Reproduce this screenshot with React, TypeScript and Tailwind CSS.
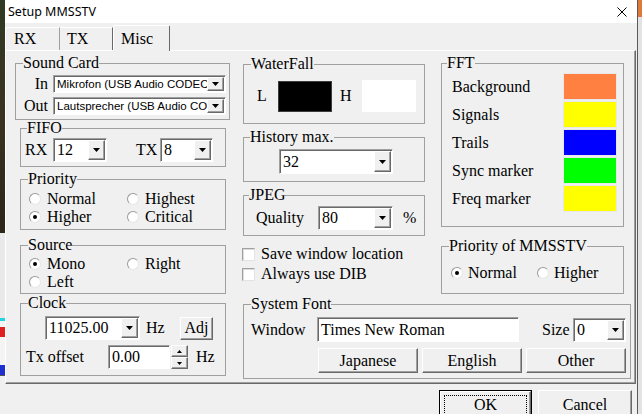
import React from "react";

// Setup MMSSTV dialog, Misc tab

const raised =
  "border border-t-white border-l-white border-r-[#696969] border-b-[#696969] bg-[#f0f0f0] shadow-[inset_-1px_-1px_0_#a0a0a0]";
const sunken =
  "border border-t-[#a0a0a0] border-l-[#a0a0a0] border-r-white border-b-white bg-white shadow-[inset_1px_1px_0_#696969]";

function DownArrow() {
  return (
    <svg width="7" height="4" viewBox="0 0 7 4" className="block">
      <path d="M0 0H7L3.5 4Z" fill="#000" />
    </svg>
  );
}

function UpArrow() {
  return (
    <svg width="5" height="3" viewBox="0 0 5 3" className="block">
      <path d="M0 3H5L2.5 0Z" fill="#000" />
    </svg>
  );
}

const Combo: React.FC<{ value: string; className?: string; small?: boolean }> = ({
  value,
  className = "",
  small = false,
}) => (
  <div className={`flex shrink-0 p-[1px] ${sunken} ${className}`}>
    <span
      className={`flex min-w-0 flex-1 items-center overflow-hidden whitespace-nowrap pl-[2px] ${
        small ? "font-['Liberation_Sans',Arial,sans-serif] text-[11.5px]" : ""
      }`}
    >
      {value}
    </span>
    <span className={`flex w-[17px] shrink-0 items-center justify-center ${raised}`}>
      <DownArrow />
    </span>
  </div>
);

const Edit: React.FC<{ value: string; className?: string }> = ({ value, className = "" }) => (
  <div className={`flex shrink-0 items-center overflow-hidden whitespace-nowrap pl-[3px] ${sunken} ${className}`}>
    {value}
  </div>
);

const Btn: React.FC<{ children: React.ReactNode; className?: string }> = ({ children, className = "" }) => (
  <div className={`flex shrink-0 items-center justify-center ${raised} ${className}`}>{children}</div>
);

const Group: React.FC<{ title: string; className?: string; legendClass?: string; children: React.ReactNode }> = ({
  title,
  className = "",
  legendClass = "ml-[7px]",
  children,
}) => (
  <fieldset className={`min-w-0 shrink-0 border border-[#a0a0a0] ${className}`}>
    <legend className={`leading-[16px] ${legendClass}`}>{title}</legend>
    {children}
  </fieldset>
);

const Radio: React.FC<{ label: string; checked?: boolean; gap?: string }> = ({ label, checked, gap = "gap-[6px]" }) => (
  <div className={`flex h-[18px] items-center ${gap}`}>
    <span className="flex h-[12px] w-[12px] shrink-0 items-center justify-center rounded-full border border-t-[#9a9a9a] border-l-[#9a9a9a] border-r-[#e6e6e6] border-b-[#e6e6e6] bg-white">
      {checked && <span className="h-[4px] w-[4px] rounded-full bg-black" />}
    </span>
    <span>{label}</span>
  </div>
);

const Check: React.FC<{ label: string }> = ({ label }) => (
  <div className="flex h-[20px] items-center gap-[6px]">
    <span className="h-[13px] w-[13px] shrink-0 border border-t-[#a0a0a0] border-l-[#a0a0a0] border-r-[#e3e3e3] border-b-[#e3e3e3] bg-white shadow-[inset_1px_1px_0_#dcdcdc]" />
    <span>{label}</span>
  </div>
);

const fftColors = [
  { label: "Background", color: "bg-[#ff8040]" },
  { label: "Signals", color: "bg-[#ffff00]" },
  { label: "Trails", color: "bg-[#0000ff]" },
  { label: "Sync marker", color: "bg-[#00ff00]" },
  { label: "Freq marker", color: "bg-[#ffff00]" },
];

function LeftColumn() {
  return (
    <div className="ml-[9px] flex w-[216px] shrink-0 flex-col">
      <Group title="Sound Card" className="mt-[4px] h-[65px] w-[215px]">
        <div className="mt-[4px] flex items-center">
          <span className="w-[32px] text-right">In</span>
          <Combo small value="Mikrofon (USB Audio CODEC" className="ml-[5px] h-[18px] w-[173px]" />
        </div>
        <div className="mt-[4px] flex items-center">
          <span className="w-[32px] text-right">Out</span>
          <Combo small value="Lautsprecher (USB Audio COD" className="ml-[5px] h-[18px] w-[173px]" />
        </div>
      </Group>

      <Group title="FIFO" legendClass="ml-[6px]" className="ml-[5px] h-[47px] w-[206px]">
        <div className="mt-[2px] flex items-center pl-[4px]">
          <span className="w-[28px]">RX</span>
          <Combo value="12" className="h-[24px] w-[54px]" />
          <span className="ml-[29px] w-[24px]">TX</span>
          <Combo value="8" className="h-[24px] w-[53px]" />
        </div>
      </Group>

      <Group title="Priority" className="ml-[5px] mt-[4px] h-[59px] w-[206px]">
        <div className="mt-[3px] grid grid-cols-[98px_1fr] pl-[8px]">
          <Radio label="Normal" />
          <Radio label="Highest" />
          <Radio label="Higher" checked />
          <Radio label="Critical" />
        </div>
      </Group>

      <Group title="Source" className="ml-[5px] mt-[7px] h-[57px] w-[206px]">
        <div className="mt-[2px] grid grid-cols-[98px_1fr] pl-[8px]">
          <Radio label="Mono" checked />
          <Radio label="Right" />
          <Radio label="Left" />
        </div>
      </Group>

      <Group title="Clock" className="ml-[5px] mt-[1px] h-[81px] w-[206px]">
        <div className="mt-[5px] flex items-center pl-[24px]">
          <Combo value="11025.00" className="h-[24px] w-[95px]" />
          <span className="ml-[6px] w-[34px]">Hz</span>
          <Btn className="h-[23px] w-[33px]">Adj</Btn>
        </div>
        <div className="mt-[5px] flex items-center pl-[5px]">
          <span className="w-[82px]">Tx offset</span>
          <Edit value="0.00" className="h-[24px] w-[62px]" />
          <div className="ml-[1px] flex h-[24px] w-[17px] flex-col">
            <Btn className="h-[12px] w-[17px]">
              <UpArrow />
            </Btn>
            <Btn className="h-[12px] w-[17px]">
              <svg width="5" height="3" viewBox="0 0 5 3" className="block">
                <path d="M0 0H5L2.5 3Z" fill="#000" />
              </svg>
            </Btn>
          </div>
          <span className="ml-[8px]">Hz</span>
        </div>
      </Group>
    </div>
  );
}

function MiddleColumn() {
  return (
    <div className="flex w-[182px] shrink-0 flex-col">
      <Group title="WaterFall" className="mt-[5px] h-[68px] w-[182px]">
        <div className="mt-[8px] flex items-center pl-[13px]">
          <span className="w-[21px]">L</span>
          <div className="h-[31px] w-[54px] border border-[#3c3c3c] bg-black" />
          <span className="ml-[8px] w-[22px]">H</span>
          <div className="h-[32px] w-[54px] bg-white" />
        </div>
      </Group>

      <Group title="History max." legendClass="ml-[6px]" className="mt-[5px] h-[53px] w-[182px]">
        <div className="mt-[4px] flex pl-[35px]">
          <Combo value="32" className="h-[25px] w-[114px]" />
        </div>
      </Group>

      <Group title="JPEG" legendClass="ml-[5px]" className="mt-[5px] h-[49px] w-[182px]">
        <div className="mt-[3px] flex items-center pl-[12px]">
          <span className="w-[62px]">Quality</span>
          <Combo value="80" className="h-[24px] w-[75px]" />
          <span className="ml-[10px]">%</span>
        </div>
      </Group>

      <div className="ml-[-1px] mt-[8px] flex flex-col">
        <Check label="Save window location" />
        <Check label="Always use DIB" />
      </div>
    </div>
  );
}

function RightColumn() {
  return (
    <div className="ml-[16px] flex w-[183px] shrink-0 flex-col">
      <Group title="FFT" legendClass="ml-[5px]" className="mt-[4px] h-[172px] w-[183px]">
        <div className="mt-[2px] flex flex-col gap-[1px]">
          {fftColors.map((c) => (
            <div key={c.label} className="flex h-[27px] items-center">
              <span className="w-[121px] pl-[10px]">{c.label}</span>
              <div className={`h-[27px] w-[54px] border border-[#e8e8e8] ${c.color}`} />
            </div>
          ))}
        </div>
      </Group>

      <Group title="Priority of MMSSTV" className="mt-[11px] h-[56px] w-[183px]">
        <div className="mt-[10px] grid grid-cols-[86px_1fr] pl-[9px]">
          <Radio label="Normal" checked gap="gap-[5px]" />
          <Radio label="Higher" gap="gap-[5px]" />
        </div>
      </Group>
    </div>
  );
}

function SystemFont() {
  return (
    <Group title="System Font" className="mt-[2px] h-[83px] w-[388px]">
      <div className="mt-[5px] flex items-center pl-[7px]">
        <span className="w-[66px]">Window</span>
        <Edit value="Times New Roman" className="h-[25px] w-[202px]" />
        <span className="ml-[23px] w-[31px]">Size</span>
        <Combo value="0" className="h-[24px] w-[53px]" />
      </div>
      <div className="mt-[6px] flex gap-[4px] pl-[74px]">
        <Btn className="h-[25px] w-[100px]">Japanese</Btn>
        <Btn className="h-[25px] w-[100px]">English</Btn>
        <Btn className="h-[25px] w-[100px]">Other</Btn>
      </div>
    </Group>
  );
}

export default function App() {
  return (
    <div className="flex h-[414px] w-[642px] overflow-hidden bg-[#f0f0f0] font-['Liberation_Serif','Times_New_Roman',serif] text-[16px] leading-[18px] text-black">
      {/* desktop behind the dialog, left */}
      <div className="flex w-[5px] shrink-0 flex-col">
        <div className="h-[233px] shrink-0 bg-gradient-to-b from-[#2f3a22] via-[#3b3222] to-[#2a2619]" />
        <div className="h-[85px] shrink-0 bg-[#e9e9e9]" />
        <div className="h-[3px] shrink-0 bg-[#22d3e0]" />
        <div className="h-[6px] shrink-0 bg-[#f4f4f4]" />
        <div className="h-[10px] shrink-0 bg-[#e02020]" />
        <div className="h-[28px] shrink-0 bg-[#f4f4f4]" />
        <div className="h-[10px] shrink-0 bg-[#2030d0]" />
        <div className="flex-1 border-t border-[#555] bg-[#f0f0f0]" />
      </div>

      <div className="flex w-[632px] shrink-0 flex-col">
        <div className="flex h-[23px] shrink-0 items-center justify-between bg-white pl-[3px] pr-[10px] font-['Noto_Sans',sans-serif] text-[12.5px]">
          <span>Setup MMSSTV</span>
          <svg width="10" height="10" viewBox="0 0 10 10" className="block">
            <path d="M0.5 0.5L9.5 9.5M9.5 0.5L0.5 9.5" stroke="#000" strokeWidth="1" />
          </svg>
        </div>

        <div className="flex h-[27px] shrink-0 items-end">
          <div className="flex h-[23px] w-[55px] items-center rounded-tl-[2px] border-l border-t border-white border-r border-r-[#a0a0a0] pl-[8px]">
            RX
          </div>
          <div className="flex h-[23px] w-[53px] items-center border-t border-white border-r border-r-[#696969] pl-[7px]">
            TX
          </div>
          <div className="relative top-[1px] z-10 flex h-[26px] w-[57px] items-start rounded-t-[2px] border-l border-t border-white border-r border-r-[#696969] bg-[#f0f0f0] pl-[7px] pt-[4px]">
            Misc
          </div>
        </div>

        <div className="flex h-[334px] w-[631px] shrink-0 border border-t-white border-l-white border-r-[#696969] border-b-[#696969] shadow-[inset_-1px_-1px_0_#a0a0a0]">
          <LeftColumn />
          <div className="ml-[12px] flex flex-col">
            <div className="flex items-start">
              <MiddleColumn />
              <RightColumn />
            </div>
            <SystemFont />
          </div>
        </div>

        <div className="flex shrink-0 items-start justify-end gap-[6px] pr-[5px] pt-[6px]">
          <div className="h-[30px] w-[93px] shrink-0 border border-black">
            <div className={`flex h-full p-[3px] ${raised}`}>
              <div className="flex flex-1 items-center justify-center border border-dotted border-black">OK</div>
            </div>
          </div>
          <Btn className="h-[30px] w-[94px]">Cancel</Btn>
        </div>
      </div>

      {/* desktop behind the dialog, right */}
      <div className="flex w-[5px] shrink-0 flex-col border-l border-[#5a5a5a]">
        <div className="h-[17px] shrink-0 bg-[#e07a3c]" />
        <div className="flex-1 bg-[#e3e3e3]" />
      </div>
    </div>
  );
}
